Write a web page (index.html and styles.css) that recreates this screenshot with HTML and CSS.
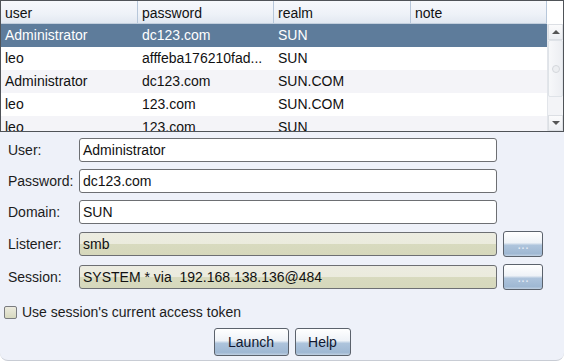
FILE: index.html
```html
<!DOCTYPE html>
<html lang="en">
<head>
    <meta charset="UTF-8">
    <title>Launch</title>
    <link rel="stylesheet" href="styles.css">
</head>
<body>
    <div class="window">
        <div class="grid">
            <div class="grid-main">
                <div class="grid-head">
                    <div class="th">user</div>
                    <div class="th">password</div>
                    <div class="th">realm</div>
                    <div class="th">note</div>
                </div>
                <div class="grid-body">
                    <div class="tr selected">
                        <div class="td">Administrator</div>
                        <div class="td">dc123.com</div>
                        <div class="td">SUN</div>
                        <div class="td"></div>
                    </div>
                    <div class="tr">
                        <div class="td">leo</div>
                        <div class="td">afffeba176210fad...</div>
                        <div class="td">SUN</div>
                        <div class="td"></div>
                    </div>
                    <div class="tr alt">
                        <div class="td">Administrator</div>
                        <div class="td">dc123.com</div>
                        <div class="td">SUN.COM</div>
                        <div class="td"></div>
                    </div>
                    <div class="tr">
                        <div class="td">leo</div>
                        <div class="td">123.com</div>
                        <div class="td">SUN.COM</div>
                        <div class="td"></div>
                    </div>
                    <div class="tr alt">
                        <div class="td">leo</div>
                        <div class="td">123.com</div>
                        <div class="td">SUN</div>
                        <div class="td"></div>
                    </div>
                </div>
            </div>
            <div class="scroll-col">
                <div class="scroll-corner"></div>
                <div class="scrollbar">
                    <div class="arrow up"></div>
                    <div class="track">
                        <div class="thumb"><span class="grip"></span></div>
                    </div>
                    <div class="arrow down"></div>
                </div>
            </div>
        </div>

        <div class="form">
            <label class="lbl">User:</label>
            <div class="field">Administrator</div>
            <span></span>

            <label class="lbl">Password:</label>
            <div class="field">dc123.com</div>
            <span></span>

            <label class="lbl">Domain:</label>
            <div class="field">SUN</div>
            <span></span>

            <label class="lbl">Listener:</label>
            <div class="field readonly">smb</div>
            <button class="btn dots">...</button>

            <label class="lbl">Session:</label>
            <div class="field readonly">SYSTEM * via&nbsp; 192.168.138.136@484</div>
            <button class="btn dots">...</button>
        </div>

        <div class="check-row">
            <span class="checkbox"></span>
            <span>Use session's current access token</span>
        </div>

        <div class="actions">
            <button class="btn launch">Launch</button>
            <button class="btn help">Help</button>
        </div>
    </div>
</body>
</html>
```

FILE: styles.css
```css
* {
    box-sizing: border-box;
}

body {
    margin: 0;
    background: #ffffff;
    font-family: "Liberation Sans", Arial, sans-serif;
    font-size: 14px;
    color: #111;
}

.window {
    width: 564px;
    height: 361px;
    background: #eef1f9;
    border-radius: 0 0 8px 8px;
    border-bottom: 1px solid #c8ccd4;
    overflow: hidden;
}

/* table */

.grid {
    display: flex;
    height: 132px;
    border: 1px solid #4f5358;
    background: #fff;
}

.grid-main {
    flex: 1;
    overflow: hidden;
}

.grid-head {
    display: grid;
    grid-template-columns: 137px 136px 137px 136px;
    height: 23px;
    background: linear-gradient(#f6f8fc, #eef2f8 60%, #e2e8f1);
    border-bottom: 1px solid #c3cfdd;
}

.th {
    padding: 3px 4px 0;
    border-right: 1px solid #b7c7da;
    line-height: 19px;
}

.tr {
    display: grid;
    grid-template-columns: 137px 136px 137px 136px;
    height: 23px;
    line-height: 23px;
    background: #fff;
}

.tr.alt {
    background: #f4f4f8;
}

.tr.selected {
    background: #5e7c9b;
    color: #fff;
}

.td {
    padding: 0 4px;
    white-space: nowrap;
    overflow: hidden;
}

.scroll-col {
    width: 16px;
    display: flex;
    flex-direction: column;
}

.scroll-corner {
    height: 23px;
    background: #fff;
}

.scrollbar {
    flex: 1;
    display: flex;
    flex-direction: column;
    background: #f3f4f7;
    border-left: 1px solid #e2e5ea;
}

.arrow {
    height: 16px;
    display: flex;
    align-items: center;
    justify-content: center;
    background: linear-gradient(#fbfbfc, #eceef2);
    border: 1px solid #dcdfe4;
}

.arrow::after {
    content: "";
    border-left: 4px solid transparent;
    border-right: 4px solid transparent;
}

.arrow.up::after {
    border-bottom: 4px solid #555;
}

.arrow.down::after {
    border-top: 4px solid #555;
}

.track {
    flex: 1;
    padding: 0;
}

.thumb {
    height: 57px;
    border: 1px solid #dfe3e8;
    border-radius: 2px;
    background: linear-gradient(90deg, #f7f8fa, #eceef2);
    display: flex;
    align-items: center;
    justify-content: center;
}

.grip {
    width: 8px;
    height: 8px;
    border-radius: 50%;
    border: 1px solid #d4d7dc;
    background: #eceef1;
}

/* form */

.form {
    display: grid;
    grid-template-columns: 65px 418px 40px;
    column-gap: 6px;
    row-gap: 7px;
    align-items: center;
    padding: 6px 0 0 8px;
}

.lbl {
    color: #1c1c1c;
}

.field {
    height: 24px;
    line-height: 22px;
    padding: 0 3px;
    border: 1px solid #6d6f73;
    border-radius: 3px;
    background: #fff;
    white-space: nowrap;
    overflow: hidden;
}

.field.readonly {
    background: linear-gradient(#ecece1, #ebebdd 50%, #d8dabf 50%, #d6d8bc);
}

.btn {
    font-family: "Liberation Sans", Arial, sans-serif;
    font-size: 14px;
    color: #101830;
    border: 1px solid #5b626c;
    border-radius: 3px;
    background: linear-gradient(#ffffff, #eef2f7 45%, #aec4dc 55%, #9fb8d3 90%, #c0d0e2);
    padding: 0;
    cursor: pointer;
}

.btn.dots {
    height: 26px;
    line-height: 20px;
    color: #e8eef6;
}

.check-row {
    display: flex;
    align-items: center;
    gap: 5px;
    padding: 14px 0 0 4px;
    color: #1c1c1c;
}

.checkbox {
    width: 13px;
    height: 13px;
    border: 1px solid #7a7c80;
    border-radius: 2px;
    background: linear-gradient(#ecebdf, #d7d9bf);
}

.actions {
    display: flex;
    justify-content: center;
    gap: 6px;
    padding: 8px 0 0 0;
}

.btn.launch {
    width: 75px;
    height: 28px;
}

.btn.help {
    width: 56px;
    height: 28px;
}
```
